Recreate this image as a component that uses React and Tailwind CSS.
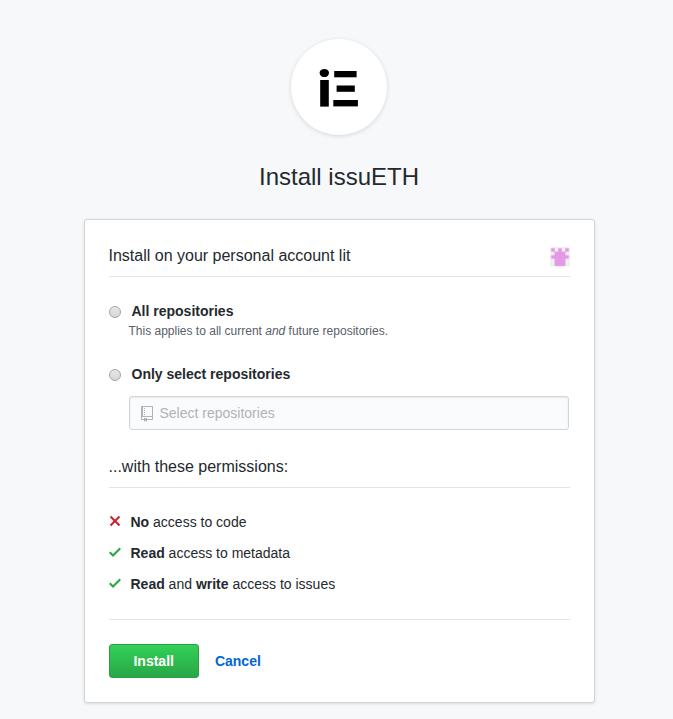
import React from "react";

const CELLS = [
  "X.X.X",
  ".XXX.",
  "XXXXX",
  ".XXX.",
  ".XXX.",
];

function Logo() {
  return (
    <div className="flex h-24 w-24 items-center justify-center rounded-full bg-white shadow-[0_1px_4px_rgba(27,31,35,0.15)]">
      <svg width="96" height="96" viewBox="0 0 96 96" fill="#000">
        <ellipse cx="33.3" cy="34" rx="4.7" ry="4.1" />
        <rect x="29.2" y="41" width="8.6" height="26.6" />
        <rect x="43.2" y="32" width="22.4" height="6.3" />
        <rect x="45.6" y="46.5" width="18.2" height="6.3" />
        <rect x="42.3" y="61" width="24.6" height="6.4" />
      </svg>
    </div>
  );
}

function Identicon() {
  return (
    <svg width="20" height="20" viewBox="0 0 20 20">
      <rect width="20" height="20" rx="2" fill="#f0f0f0" />
      <path
        fill="#e598e5"
        d={CELLS.flatMap((row, y) =>
          [...row].map((c, x) => (c === "X" ? `M${1.25 + x * 3.5} ${1.25 + y * 3.5}h3.5v3.5h-3.5z` : ""))
        ).join("")}
      />
      <rect x="4.75" y="4.75" width="10.5" height="14" fill="#e598e5" />
    </svg>
  );
}

function Icon({ d, className }) {
  return (
    <svg width="12" height="16" viewBox="0 0 12 16" className={className} fill="currentColor">
      <path fillRule="evenodd" d={d} />
    </svg>
  );
}

const X_PATH =
  "M7.48 8l3.75 3.75-1.48 1.48L6 9.48l-3.75 3.75-1.48-1.48L4.52 8 .77 4.25l1.48-1.48L6 6.52l3.75-3.75 1.48 1.48L7.48 8z";
const CHECK_PATH = "M12 5l-8 8-4-4 1.5-1.5L4 10l6.5-6.5L12 5z";
const REPO_PATH =
  "M4 9H3V8h1v1zm0-3H3v1h1V6zm0-2H3v1h1V4zm0-2H3v1h1V2zm8-1v12c0 .55-.45 1-1 1H6v2l-1.5-1.5L3 16v-2H1c-.55 0-1-.45-1-1V1c0-.55.45-1 1-1h10c.55 0 1 .45 1 1zm-1 10H1v2h2v-1h3v1h5v-2zm0-10H2v9h9V1z";

function Radio() {
  return (
    <span className="mt-[5px] h-3 w-3 shrink-0 rounded-full border border-[#a5a5a5] bg-linear-to-b from-[#e8e8e8] to-[#d6d6d6]" />
  );
}

function Permission({ ok, children }) {
  return (
    <li className="flex h-[21px] items-center">
      <Icon d={ok ? CHECK_PATH : X_PATH} className={ok ? "mb-[3px] text-[#28a745]" : "mb-[3px] text-[#cb2431]"} />
      <span className="ml-2.5">{children}</span>
    </li>
  );
}

export default function App() {
  return (
    <div className="flex h-[719px] w-[673px] flex-col overflow-hidden bg-[#f6f8fa] font-['Liberation_Sans',Arial,sans-serif] text-sm leading-[21px] text-[#24292e]">
      <header className="flex flex-col items-center pt-[39px] pl-[5px]">
        <Logo />
        <h1 className="mt-6 text-2xl leading-9">Install issuETH</h1>
      </header>
      <main className="mt-6 ml-[83.5px] h-[484px] w-[511px] rounded-[3px] border border-[#d1d5da] bg-white px-6 shadow-[0_1px_3px_rgba(27,31,35,0.12)]">
        <div className="flex h-[57px] items-start justify-between border-b border-[#e1e4e8]">
          <h2 className="mt-6 text-base leading-6">Install on your personal account lit</h2>
          <span className="mt-[27px]">
            <Identicon />
          </span>
        </div>
        <label className="mt-6 flex items-start">
          <Radio />
          <span className="ml-[11px] font-bold">All repositories</span>
        </label>
        <p className="ml-5 text-xs leading-[18px] text-[#586069]">
          This applies to all current <em>and</em> future repositories.
        </p>
        <label className="mt-6 flex items-start">
          <Radio />
          <span className="ml-[11px] font-bold">Only select repositories</span>
        </label>
        <div className="mt-[11px] ml-5 flex h-[34px] w-[440px] items-center rounded-[3px] border border-[#d1d5da] bg-[#fafbfc] pl-[11px] text-[#b0b3b6] shadow-[inset_0_1px_2px_rgba(27,31,35,0.075)]">
          <Icon d={REPO_PATH} className="mt-0.5" />
          <span className="ml-[7px]">Select repositories</span>
        </div>
        <h2 className="mt-[25px] h-[33px] border-b border-[#e1e4e8] text-base leading-6">...with these permissions:</h2>
        <ul className="mt-6 flex flex-col gap-2.5">
          <Permission>
            <b>No</b> access to code
          </Permission>
          <Permission ok>
            <b>Read</b> access to metadata
          </Permission>
          <Permission ok>
            <b>Read</b> and <b>write</b> access to issues
          </Permission>
        </ul>
        <div className="mt-6 flex items-center border-t border-[#e1e4e8] pt-6 font-bold">
          <button className="h-[34px] w-[90.4px] rounded-[3px] border border-[#28a043] bg-linear-to-b from-[#34d058] to-[#28a745] text-white">
            Install
          </button>
          <a className="ml-4 text-[#0366d6]">Cancel</a>
        </div>
      </main>
    </div>
  );
}
